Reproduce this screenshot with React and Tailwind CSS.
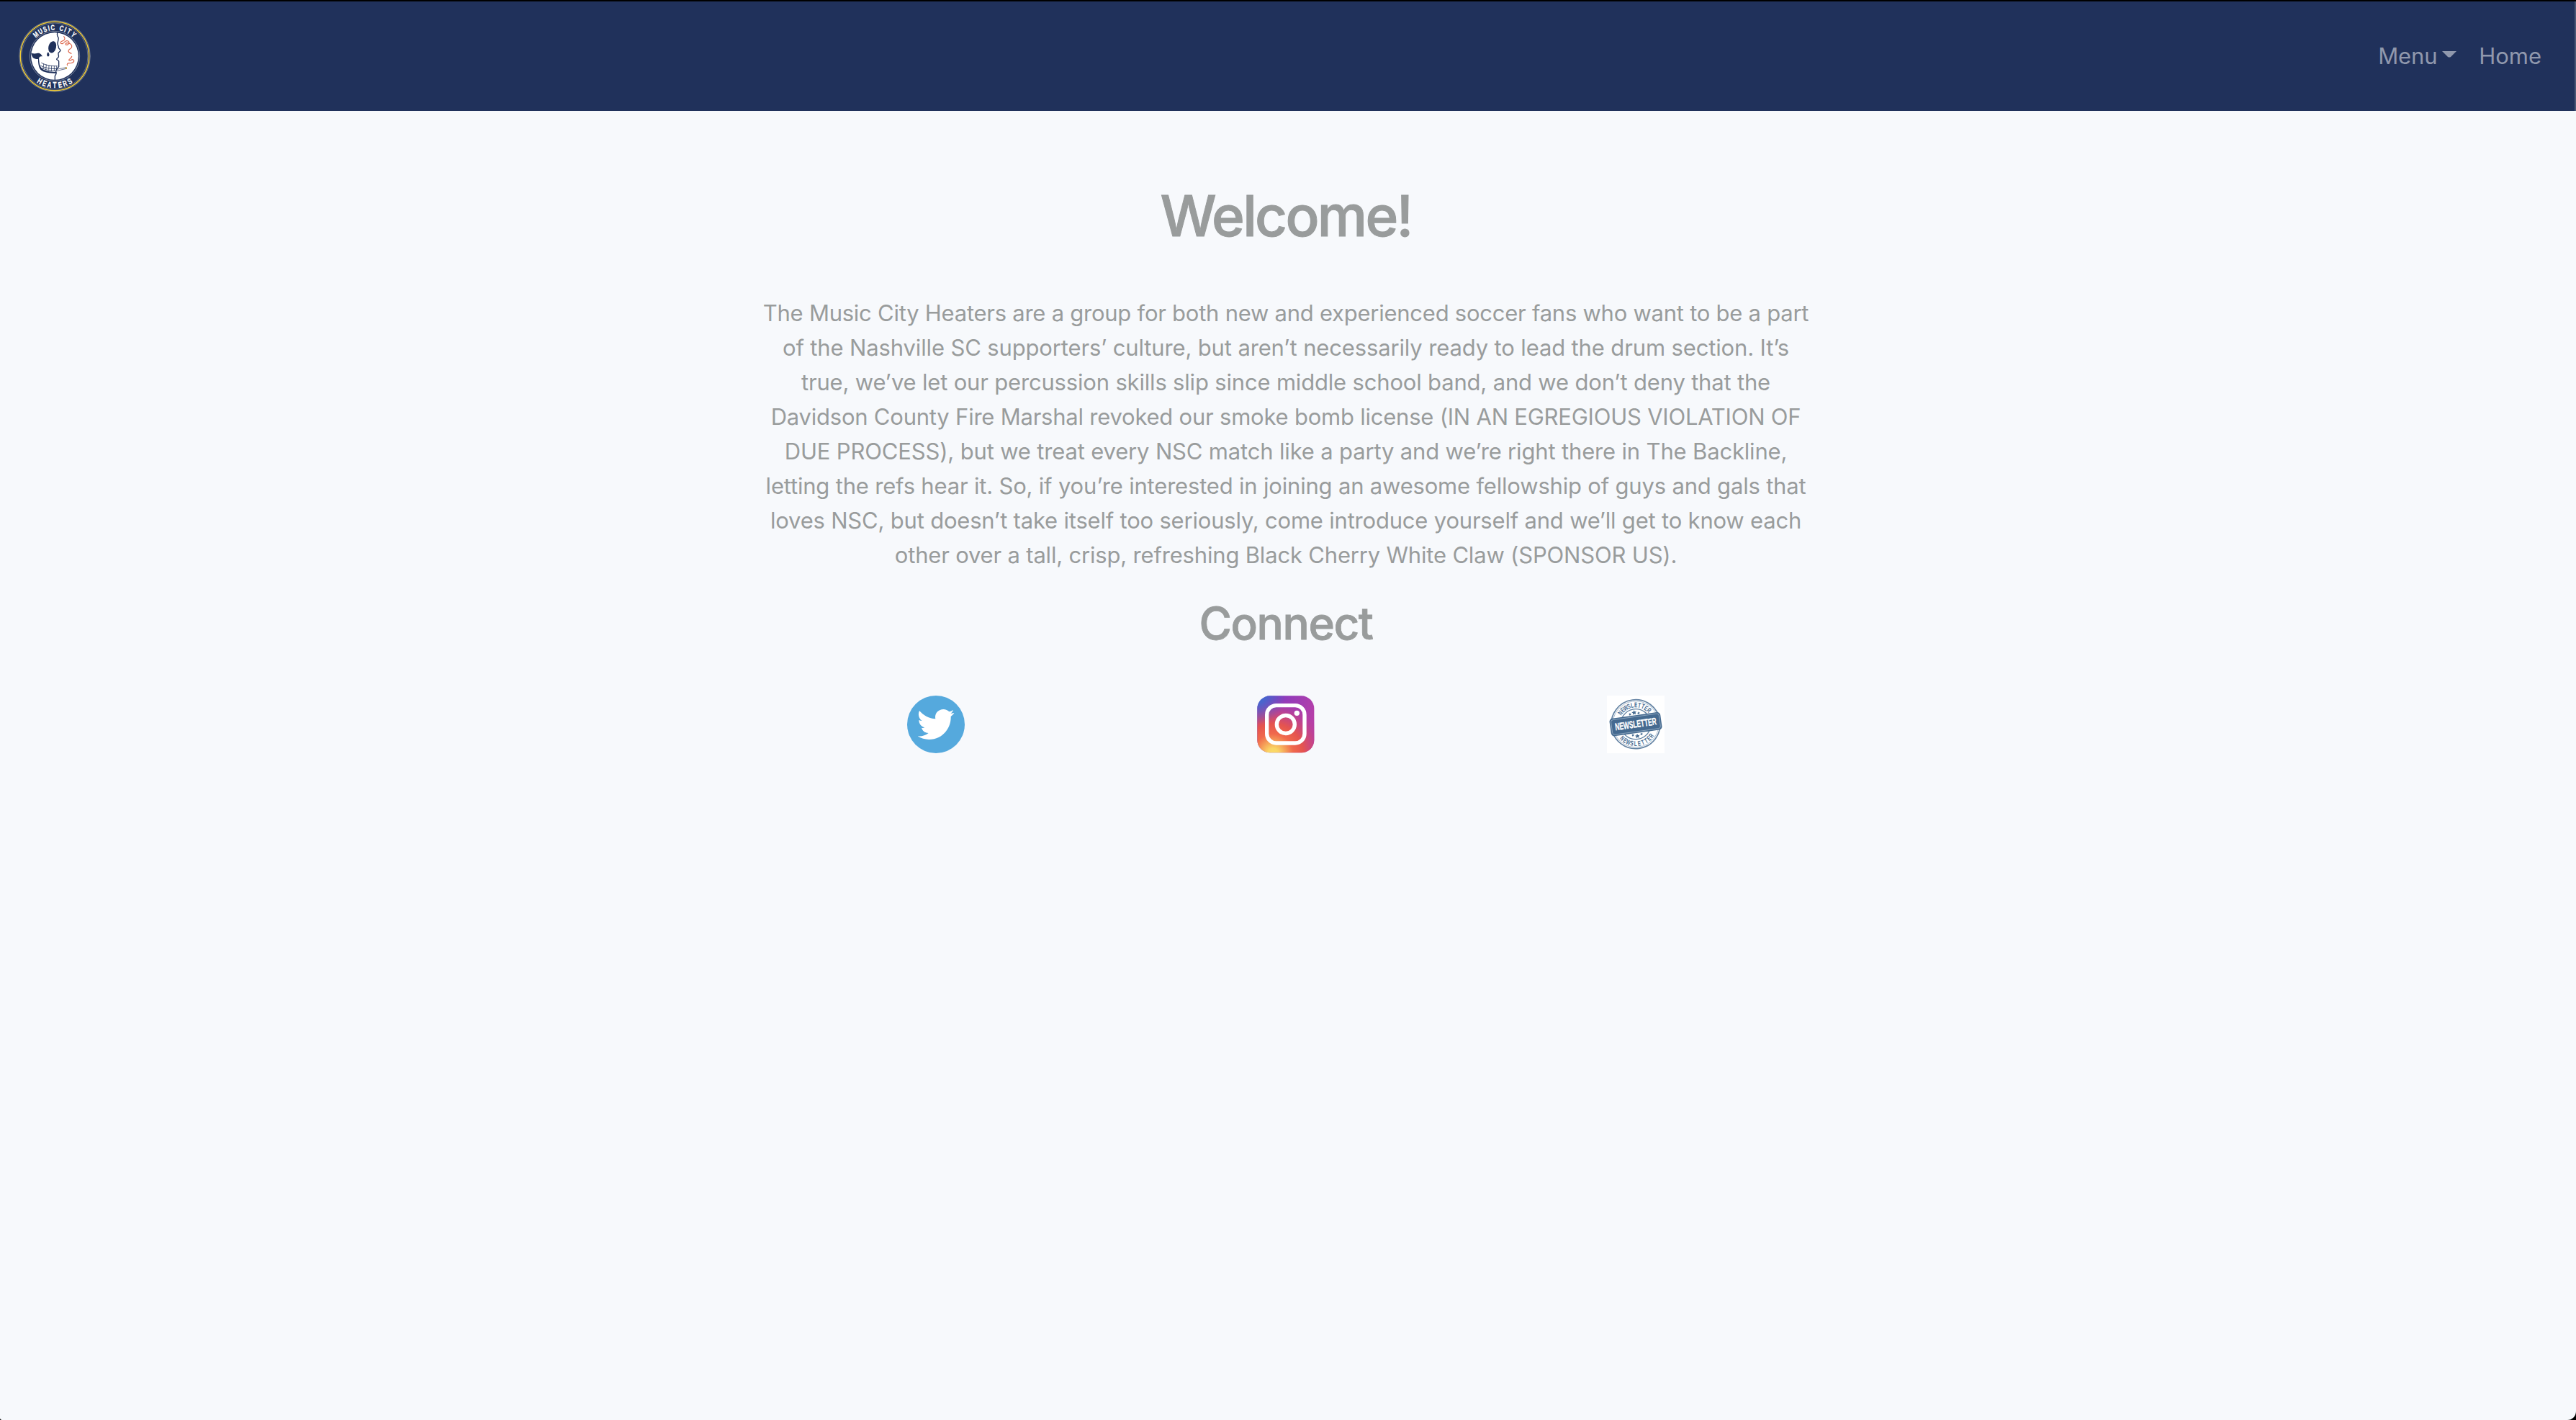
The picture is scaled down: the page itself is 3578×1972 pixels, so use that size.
import React from "react";

const LINES = [
  ["The Music City Heaters are a group for both new and experienced soccer fans who want to be a part", "tracking-[-0.25px]"],
  ["of the Nashville SC supporters’ culture, but aren’t necessarily ready to lead the drum section. It’s", "tracking-[-0.14px]"],
  ["true, we’ve let our percussion skills slip since middle school band, and we don’t deny that the", "tracking-[-0.18px]"],
  ["Davidson County Fire Marshal revoked our smoke bomb license (IN AN EGREGIOUS VIOLATION OF", "tracking-[-0.225px]"],
  ["DUE PROCESS), but we treat every NSC match like a party and we’re right there in The Backline,", "tracking-[-0.165px]"],
  ["letting the refs hear it. So, if you’re interested in joining an awesome fellowship of guys and gals that", "tracking-[-0.19px]"],
  ["loves NSC, but doesn’t take itself too seriously, come introduce yourself and we’ll get to know each", "tracking-[-0.2px]"],
  ["other over a tall, crisp, refreshing Black Cherry White Claw (SPONSOR US).", "tracking-[-0.185px]"],
];

// Badge lettering: [letter, degrees from vertical]
const TOP = [["M", -41], ["U", -30], ["S", -20], ["I", -12], ["C", -4], ["C", 14], ["I", 22], ["T", 30], ["Y", 41]];
const BOTTOM = [["H", -31], ["E", -20.5], ["A", -10.5], ["T", 0], ["E", 10.5], ["R", 20.5], ["S", 31]];

function Logo() {
  return (
    <svg className="size-[100px]" viewBox="0 0 300 300">
      <g transform="translate(150 150)">
        <circle r="148" fill="none" stroke="#7f89a0" strokeWidth="2.5" />
        <circle r="143" fill="none" stroke="#f0cb36" strokeWidth="4.5" />
        <circle r="138" fill="none" stroke="#7f89a0" strokeWidth="2" />
        <circle r="104" fill="none" stroke="#8c95aa" strokeWidth="2.5" />
        <circle r="98.5" fill="#fff" />
        <g fill="#fff" stroke="#fff" strokeWidth="0.8" fontFamily="Liberation Sans" fontWeight="700" fontSize="31" textAnchor="middle">
          {TOP.map(([c, a], i) => (
            <text key={i} transform={`rotate(${a}) translate(0 -109) scale(.74 1)`}>{c}</text>
          ))}
          {BOTTOM.map(([c, a], i) => (
            <text key={i} transform={`rotate(${-a}) translate(0 133) scale(.78 1.08)`}>{c}</text>
          ))}
        </g>
      </g>
      <g transform="translate(-78 -84)" strokeLinecap="round" strokeLinejoin="round">
        <g fill="#20315b">
          <ellipse cx="218" cy="196" rx="16" ry="25" transform="rotate(14 218 196)" />
          <path d="M201 217c-6 5-7 12-4 17 5 4 10-2 8-9z" />
          <path d="M130 220c8 6 19 3 28 1 10-1 15 7 19 14-5-1-9-1-12 2-3 4-2 9-6 9-7 1-16-1-22-6-4-5-6-12-7-20z" />
          <path d="M162 238c1 22 3 38 12 46 10 10 32 15 62 16l-1 5c-28 0-55-3-66-15-8-10-11-29-10-50z" />
        </g>
        <g fill="none" stroke="#20315b">
          <path d="M240 134c-3 9-2 16 3 22 3 6-3 16-3 26 0 6 5 10 4 17 2 5 8 7 8 11-1 5-8 7-9 12-1 6 3 10 1 15-2 5-8 6-8 10 3 4 9 4 9 9v22c-5 6-12 10-12 18l1 12-5 8v16" strokeWidth="4" />
          <path d="M173 262c14 9 40 14 65 13M170 274c16 9 40 13 65 13M176 284c16 8 36 12 58 12" strokeWidth="2.5" />
          <path d="M182 266l-2 20M193 270l-2 21M204 273l-1 21M215 275l-1 21M226 276v20M236 276v17" strokeWidth="2.2" />
          <path d="M236 289l40-8M238 295l38-9" strokeWidth="2" />
        </g>
        <path d="M273 280l6 1v6l-6 1z" fill="#c79a35" />
        <path d="M266 152c6 7 5 14-2 17-8 3-14 6-11 11 6 5 12 0 17-6 7-7 17-4 18 2 1 7-9 14-14 10-3-6 6-9 12-6 8 2 14 8 13 16-2 8-14 9-14 16 0 7 7 9 12 11" fill="none" stroke="#dd6a50" strokeWidth="3.5" />
        <path d="M281 272c-3-5 0-9 7-9 9 1 17-1 20-7 2-7-5-10-11-6-5 3-9 4-10 0 1-6 11-6 12-15" fill="none" stroke="#dd6a50" strokeWidth="3.5" />
      </g>
    </svg>
  );
}

function Twitter() {
  return (
    <svg className="size-20" viewBox="0 0 240 240">
      <circle cx="120" cy="120" r="120" fill="#55a9dd" />
      <path
        fill="#fff"
        d="M51 63c17 20 40 32 67 34-5-20 10-40 33-40 10 0 18 4 24 10 7-1 11-4 17-7-2 7-6 11-11 15l15-3c-3 6-8 10-14 15 2 50-36 96-91 96-17 0-33-5-47-14 17 2 32-3 45-13-14 0-25-9-29-22 5 1 9 1 13-1-15-4-24-16-24-31 4 2 9 3 13 3-14-9-18-27-11-42z"
      />
    </svg>
  );
}

function Instagram() {
  return (
    <svg className="size-20" viewBox="0 0 240 240">
      <defs>
        <linearGradient id="igBase" x1="0" y1="0" x2="1" y2="0.35">
          <stop offset="0" stopColor="#5f4bc4" />
          <stop offset="0.45" stopColor="#8f3bbb" />
          <stop offset="1" stopColor="#b63fa8" />
        </linearGradient>
        <radialGradient id="igBlue" cx="0" cy="0" r="0.5">
          <stop offset="0" stopColor="#3575d4" />
          <stop offset="1" stopColor="#4a62cc" stopOpacity="0" />
        </radialGradient>
        <radialGradient id="igWarm" cx="0.28" cy="1.02" r="0.98">
          <stop offset="0" stopColor="#fbdc68" />
          <stop offset="0.1" stopColor="#fad565" />
          <stop offset="0.36" stopColor="#f0694c" />
          <stop offset="0.54" stopColor="#e5544f" />
          <stop offset="0.76" stopColor="#c54488" stopOpacity="0.8" />
          <stop offset="1" stopColor="#b03bb0" stopOpacity="0" />
        </radialGradient>
      </defs>
      <g>
        <rect x="1" y="1" width="237" height="237" rx="53" fill="url(#igBase)" />
        <rect x="1" y="1" width="237" height="237" rx="53" fill="url(#igWarm)" />
        <rect x="1" y="1" width="237" height="237" rx="53" fill="url(#igBlue)" />
      </g>
      <rect x="41" y="41" width="157" height="157" rx="39" fill="none" stroke="#fff" strokeWidth="16" />
      <circle cx="119.500" cy="120" r="37.500" fill="none" stroke="#fff" strokeWidth="16" />
      <circle cx="166" cy="73" r="11" fill="#fff" />
    </svg>
  );
}

const RING = "NEWSLETTER".split("");
const STEP = 10.8;

function Newsletter() {
  return (
    <svg className="size-20 bg-white" viewBox="0 0 240 240">
      <g transform="translate(120 119) rotate(-8)" fill="#456a90">
        <g fill="none" stroke="#6483a3">
          <circle r="102" strokeWidth="5" />
          <circle r="96" strokeWidth="1.500" />
          <circle r="63" strokeWidth="4" />
        </g>
        <g fontFamily="Liberation Sans" fontWeight="700" fontSize="29" textAnchor="middle">
          {RING.map((c, i) => (
            <text key={i} transform={`rotate(${(i - 4.5) * STEP + 3}) translate(0 -70) scale(.66 1)`}>{c}</text>
          ))}
          {RING.map((c, i) => (
            <text key={i} transform={`rotate(${(4.5 - i) * STEP + 3}) translate(0 91) scale(.66 1)`}>{c}</text>
          ))}
        </g>
        <path d="M0-59l3 7h7l-5 5 2 7-7-4-7 4 2-7-5-5h7z" />
        <path d="M-18-50l2 4h4l-3 3 1 4-4-2-4 2 1-4-3-3h4zM18-50l2 4h4l-3 3 1 4-4-2-4 2 1-4-3-3h4z" />
        <path d="M0 40l3 7h7l-5 5 2 7-7-4-7 4 2-7-5-5h7zM-18 38l2 4h4l-3 3 1 4-4-2-4 2 1-4-3-3h4zM18 38l2 4h4l-3 3 1 4-4-2-4 2 1-4-3-3h4z" />
        <rect x="-107" y="-37" width="214" height="74" rx="13" />
        <rect x="-101" y="-31" width="202" height="62" rx="9" fill="none" stroke="#a9bccf" strokeWidth="2" />
        <text transform="translate(0 14) scale(.6 1)" fontFamily="Liberation Sans" fontWeight="700" fontSize="42" textAnchor="middle" fill="#fff" stroke="#fff" strokeWidth="1">
          NEWSLETTER
        </text>
      </g>
    </svg>
  );
}

export default function App() {
  return (
    <div className="h-[1972px] bg-black font-['Inter',sans-serif]">
      <div className="flex h-full flex-col overflow-hidden rounded-br-[12px] rounded-bl-[3px] border-t-2 border-black bg-[#f7f9fc]">
        <nav className="flex h-[152px] shrink-0 items-center justify-between border-r-2 border-[#4b5876] bg-[#20315b] pr-[46px] pl-[26px] text-[31px] leading-[48px] text-[#9098ad]">
          <a className="flex">
            <Logo />
          </a>
          <div className="flex">
            <a className="flex w-[140px] items-center tracking-[-0.1px]">
              Menu
              <svg className="mb-1 ml-[7px] h-[10px] w-5" viewBox="0 0 20 10" fill="currentColor">
                <path d="M0 0h20l-8 8q-2 1-4 0z" />
              </svg>
            </a>
            <a>Home</a>
          </div>
        </nav>
        <main className="flex w-[3572px] flex-col items-center text-center text-[#999c9c]">
          <h1 className="mt-[98px] text-[78px] leading-[96px] font-medium tracking-[-2.7px] [-webkit-text-stroke:1px_#999c9c]">Welcome!</h1>
          <p className="mt-[63px] text-[31px] leading-[48px]">
            {LINES.map(([text, tracking]) => (
              <span key={text} className={`block whitespace-nowrap ${tracking}`}>
                {text}
              </span>
            ))}
          </p>
          <h2 className="mt-[33px] text-[62px] leading-[76px] font-medium tracking-[-1.4px] [-webkit-text-stroke:0.8px_#999c9c]">Connect</h2>
          <div className="mt-[62px] grid w-[1458px] grid-cols-3 justify-items-center">
            <Twitter />
            <Instagram />
            <Newsletter />
          </div>
        </main>
      </div>
    </div>
  );
}
